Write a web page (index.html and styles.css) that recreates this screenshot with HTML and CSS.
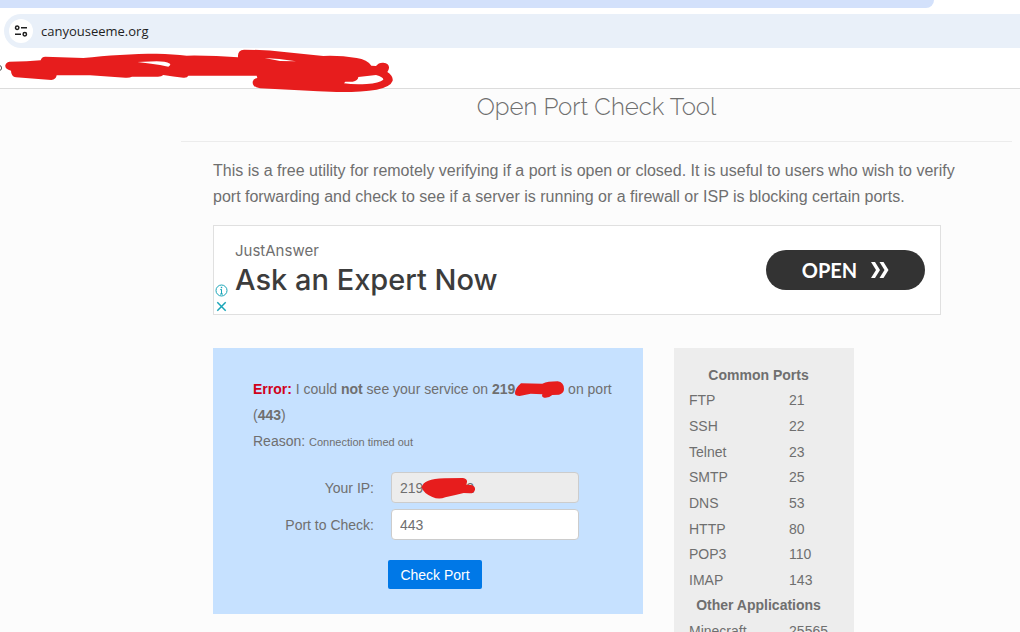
FILE: index.html
```
<!DOCTYPE html>
<html lang="en">
<head>
  <meta charset="UTF-8" />
  <meta name="viewport" content="width=device-width, initial-scale=1.0" />
  <title>Open Port Check Tool</title>
  <link rel="stylesheet" href="styles.css">
</head>
<body>
  <div class="browser">
    <div class="tab-strip"></div>
    <div class="address-bar">
      <button class="site-info" type="button" aria-label="Site information">
        <svg width="14" height="14" viewBox="0 0 14 14" fill="none" stroke="#1f1f1f" stroke-width="1.5">
          <circle cx="3.2" cy="3.8" r="1.7"/>
          <path d="M7 3.8h6M1 10.2h6"/>
          <circle cx="10.8" cy="10.2" r="1.7"/>
        </svg>
      </button>
      <span class="url">canyouseeme.org</span>
    </div>
    <div class="bookmarks">
      <svg class="bookmark-icon" width="3" height="10" viewBox="0 0 3 10" fill="none" stroke="#555">
        <circle cx="-1" cy="5" r="2.6"/>
      </svg>
      <svg class="scribble" width="400" height="50" viewBox="0 144 1200 150" fill="#e71d1d" fill-rule="evenodd">
        <path d="M28 185 L80 184 L122 181 Q124 171 136 170 L250 174 C320 166 400 161 470 161 Q520 162 560 167 Q640 166 714 172 Q712 150 732 149 Q790 149 860 157 L970 168 Q1020 166 1070 174 Q1102 179 1114 197 L1128 198 Q1136 187 1150 188 Q1168 190 1167 204 Q1166 211 1162 216 Q1180 228 1178 242 Q1172 260 1130 269 Q1080 277 1010 276 Q900 272 780 265 Q757 262 758 245 Q760 236 772 234 L770 227 L565 227 Q562 234 550 233 Q520 230 490 225 Q484 231 470 230 L396 230 Q388 234 376 233 L270 226 L170 226 Q168 239 154 240 L48 232 Q33 229 33 212 Q14 207 16 196 Q18 187 28 185 Z
          M412 186 Q450 190 480 195 L505 200 Q513 195 510 191 Q496 184 470 184 Z
          M794 174 L838 177 L888 184 L840 183 Z
          M1032 250 L1036 245 L1058 245 Q1074 242 1075 231 L1128 225 Q1150 231 1150 239 Q1138 249 1100 252 Q1060 254 1032 250 Z"/>
      </svg>
    </div>
  </div>

  <main class="page">
    <h1>Open Port Check Tool</h1>
    <div class="content">
      <p class="intro">This is a free utility for remotely verifying if a port is open or closed. It is useful to users who wish to verify port forwarding and check to see if a server is running or a firewall or ISP is blocking certain ports.</p>

      <div class="ad">
        <div class="ad-choices">
          <svg width="13" height="13" viewBox="0 0 13 13" fill="none" stroke="#19a5b8">
            <circle cx="6.5" cy="6.5" r="5.5"/>
            <path d="M6.500 5.500v4.500M5.200 5.600h1.600M5 10h3"/>
            <path d="M6.500 2.800v1.400" stroke-width="1.4"/>
          </svg>
          <svg width="13" height="13" viewBox="0 0 13 13" fill="none" stroke="#19a5b8" stroke-width="1.5">
            <path d="M2.300 2.300l8.400 8.400M10.700 2.300l-8.400 8.400"/>
          </svg>
        </div>
        <div class="ad-text">
          <span class="ad-brand">JustAnswer</span>
          <span class="ad-title">Ask an Expert Now</span>
        </div>
        <a class="ad-open" href="#">OPEN
          <svg width="18" height="16" viewBox="0 0 18 16" fill="#fff">
            <path d="M0 0h4l5 8-5 8H0l5-8z"/>
            <path d="M8.500 0h4l5 8-5 8h-4l5-8z"/>
          </svg>
        </a>
      </div>

      <div class="columns">
        <section class="checker">
          <p class="result"><b class="error">Error:</b> I could <b>not</b> see your service on <b>219</b><svg class="mark" width="49" height="18" viewBox="0 0 147 54" fill="#e71d1d"><path d="M18 7 L82 8 Q98 1 128 1 Q147 4 147 24 Q147 37 132 41 L112 42 Q101 52 87 50 Q79 48 82 40 L47 38 L14 45 Q0 45 0 37 Q0 22 18 7 Z"/></svg> on port (<b>443</b>)<br>Reason: <small>Connection timed out</small></p>

          <form onsubmit="return false">
            <div class="fields">
              <label for="ip">Your IP:</label>
              <div class="ip-field">
                <input type="text" id="ip" value="219           2" readonly />
                <svg class="ip-mark" width="54" height="22" viewBox="0 0 162 66" fill="#e71d1d">
                  <path d="M22 11 Q38 5 70 4 L126 3 Q139 5 138 15 L136 23 L150 24 Q163 26 162 38 Q160 49 146 49 L128 48 Q100 55 73 61 Q53 69 34 60 Q7 49 2 31 Q4 18 22 11 Z"/>
                </svg>
              </div>
              <label for="port">Port to Check:</label>
              <input type="text" id="port" value="443" />
            </div>
            <button class="check-button" type="submit">Check Port</button>
          </form>
        </section>

        <aside class="ports">
          <table>
            <tbody>
              <tr><th colspan="2">Common Ports</th></tr>
              <tr><td>FTP</td><td>21</td></tr>
              <tr><td>SSH</td><td>22</td></tr>
              <tr><td>Telnet</td><td>23</td></tr>
              <tr><td>SMTP</td><td>25</td></tr>
              <tr><td>DNS</td><td>53</td></tr>
              <tr><td>HTTP</td><td>80</td></tr>
              <tr><td>POP3</td><td>110</td></tr>
              <tr><td>IMAP</td><td>143</td></tr>
              <tr><th colspan="2">Other Applications</th></tr>
              <tr><td>Minecraft</td><td>25565</td></tr>
            </tbody>
          </table>
        </aside>
      </div>
    </div>
  </main>
</body>
</html>
```
FILE: styles.css
```
* {
  box-sizing: border-box;
}
body {
  margin: 0;
  height: 100vh;
  overflow: hidden;
  background-color: #fcfcfc;
  color: #6f6f6f;
  font-family: "Liberation Sans", Arial, sans-serif;
  font-size: 14px;
  line-height: 26px;
}

/* browser chrome */
.browser {
  background-color: #fff;
  border-bottom: 1px solid #dcdcdc;
}
.tab-strip {
  height: 8px;
  margin-right: 86px;
  background-color: #d3e1fb;
  border-bottom-right-radius: 8px;
}
.address-bar {
  display: flex;
  align-items: center;
  gap: 8px;
  height: 34px;
  margin: 6px 0 0 4px;
  padding-left: 5px;
  background-color: #e9f0f9;
  border-radius: 17px 0 0 17px;
}
.site-info {
  display: flex;
  align-items: center;
  justify-content: center;
  width: 24px;
  height: 24px;
  padding: 0;
  border: none;
  border-radius: 50%;
  background-color: #fff;
}
.url {
  color: #1f1f1f;
  font-family: "Open Sans", "Noto Sans", sans-serif;
  font-size: 13px;
}
.bookmarks {
  position: relative;
  display: flex;
  align-items: center;
  height: 40px;
}
.scribble {
  position: absolute;
  top: 0;
  left: 0;
}

/* page */
.page {
  margin: 0 8px 0 181px;
}
h1 {
  margin: 0;
  padding: 2px 0 18px;
  border-bottom: 1px solid #ececec;
  font-family: Raleway, Lato, sans-serif;
  font-size: 24px;
  font-weight: 300;
  line-height: 32px;
  text-align: center;
}
.content {
  padding: 16px 32px 0;
}
.intro {
  margin: 0 0 15px;
  font-size: 16px;
}
.ad {
  display: flex;
  align-items: center;
  max-width: 728px;
  height: 90px;
  margin-bottom: 33px;
  padding-right: 15px;
  background-color: #fff;
  border: 1px solid #e0e0e0;
}
.ad-choices {
  display: flex;
  flex-direction: column;
  align-self: flex-end;
  gap: 3px;
  width: 21px;
  padding: 0 0 1px 1px;
}
.ad-text {
  display: flex;
  flex: 1;
  flex-direction: column;
}
.ad-brand {
  font-family: "Google Sans", Inter, sans-serif;
  font-size: 15px;
  line-height: 20px;
}
.ad-title {
  color: #3c3c3c;
  font-family: "Google Sans", Inter, sans-serif;
  font-size: 29px;
  font-weight: 500;
  line-height: 38px;
}
.ad-open {
  display: flex;
  align-items: center;
  justify-content: center;
  gap: 14px;
  width: 159px;
  height: 40px;
  border-radius: 20px;
  background-color: #333;
  color: #fff;
  font-family: "Google Sans", Lato, sans-serif;
  font-size: 20px;
  font-weight: 700;
  text-decoration: none;
}
.columns {
  display: flex;
  align-items: flex-start;
  gap: 31px;
}

/* port check form */
.checker {
  flex: 0 1 430px;
  padding: 28px 26px 25px 40px;
  background-color: #c6e1ff;
}
.result {
  margin: 0 0 18px;
}
.result small {
  font-size: 11px;
  line-height: 20px;
}
.error {
  color: #d0021b;
}
.mark {
  vertical-align: middle;
}
.fields {
  display: grid;
  grid-template-columns: 121px 188px;
  align-items: center;
  gap: 6px 17px;
}
.fields label {
  text-align: right;
}
.fields input {
  display: block;
  width: 100%;
  height: 31px;
  padding: 0 8px;
  border: 1px solid #ccc;
  border-radius: 4px;
  background-color: #fff;
  color: #6f6f6f;
  font: inherit;
}
.fields input[readonly] {
  background-color: #ececec;
}
.ip-field {
  position: relative;
}
.ip-mark {
  position: absolute;
  top: 5px;
  left: 30px;
}
.check-button {
  display: block;
  width: 94px;
  height: 29px;
  margin: 20px 0 0 135px;
  padding: 0;
  border: none;
  border-radius: 2px;
  background-color: #0078e7;
  color: #fff;
  font: inherit;
  cursor: pointer;
}

/* list of ports */
.ports {
  flex: 0 0 180px;
  padding: 14px 26px 0 15px;
  background-color: #ededed;
}
.ports table {
  width: 100%;
  height: 282px;
  border-collapse: collapse;
  line-height: 24px;
}
.ports th, .ports td {
  padding: 0;
  text-align: left;
}
.ports th {
  text-align: center;
}
.ports td:first-child {
  width: 101px;
}
```
